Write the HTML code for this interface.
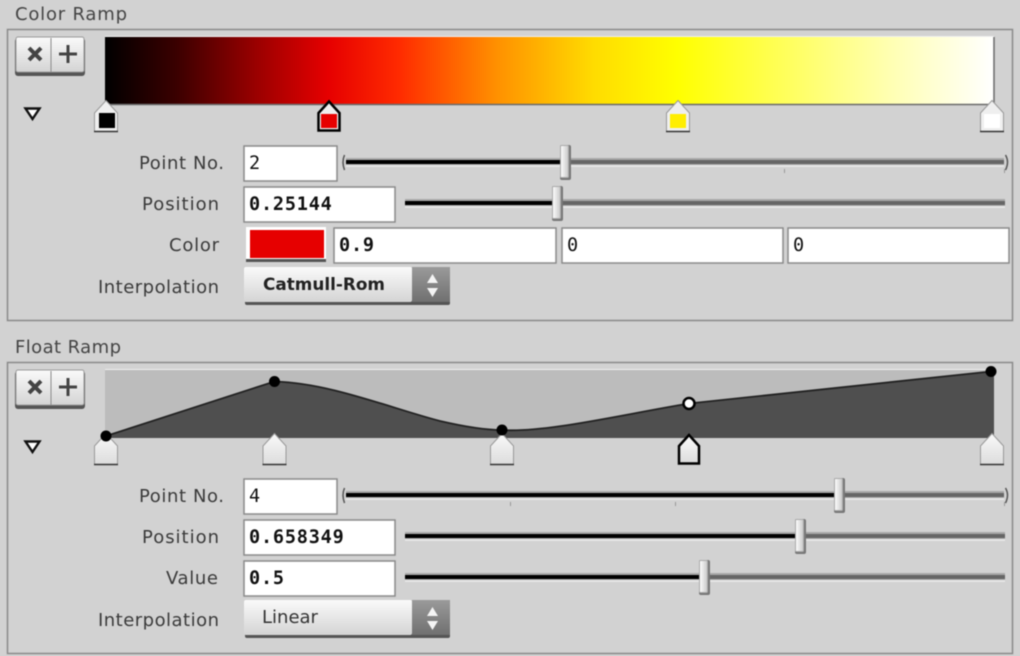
<!DOCTYPE html>
<html><head><meta charset="utf-8"><style>
html,body{margin:0;padding:0;background:#d2d2d2}
#r{position:relative;width:1020px;height:656px;overflow:hidden;background:#d2d2d2}
svg{position:absolute;left:0;top:0;filter:blur(.4px)}
text{font-family:"DejaVu Sans","Liberation Sans",sans-serif;font-size:18px;fill:#3a3a3a}
.m{font-family:"DejaVu Sans Mono","Liberation Mono",monospace;fill:#111}
.b{font-weight:bold;font-size:18.500px;letter-spacing:.8px}
.n{font-size:18.500px}
</style></head><body><div id="r">
<svg width="1020" height="656" viewBox="0 0 1020 656">
<defs>
<linearGradient id="cr" x1="0" x2="1" y1="0" y2="0">
<stop offset="0" stop-color="#000"/><stop offset=".08" stop-color="#3a0000"/><stop offset=".17" stop-color="#9a0000"/><stop offset=".251" stop-color="#e60000"/><stop offset=".33" stop-color="#ff2a00"/><stop offset=".44" stop-color="#ff9000"/><stop offset=".55" stop-color="#ffdc00"/><stop offset=".644" stop-color="#ffff00"/><stop offset=".75" stop-color="#ffff50"/><stop offset=".88" stop-color="#ffffb0"/><stop offset="1" stop-color="#fff"/>
</linearGradient>
<linearGradient id="btn" x1="0" x2="0" y1="0" y2="1"><stop offset="0" stop-color="#fafafa"/><stop offset="1" stop-color="#d4d4d4"/></linearGradient>
<linearGradient id="pt" x1="0" x2="0" y1="0" y2="1"><stop offset="0" stop-color="#fafafa"/><stop offset="1" stop-color="#dcdcdc"/></linearGradient>
<linearGradient id="hd" x1="0" x2="1" y1="0" y2="0"><stop offset="0" stop-color="#fff"/><stop offset="1" stop-color="#c8c8c8"/></linearGradient>
<linearGradient id="arr" x1="0" x2="0" y1="0" y2="1"><stop offset="0" stop-color="#9a9a9a"/><stop offset="1" stop-color="#707070"/></linearGradient>
<g id="tools">
<rect x="15" y="1" width="70" height="38" rx="3" fill="#555"/>
<rect x="16" y="0" width="68" height="35" rx="2" fill="url(#btn)" stroke="#9a9a9a" stroke-width="1"/>
<line x1="51" y1="1" x2="51" y2="35" stroke="#8a8a8a"/>
<path d="M29 11L41 23M41 11L29 23" stroke="#444" stroke-width="4" fill="none"/>
<path d="M59 17H77M68 8V26" stroke="#444" stroke-width="3" fill="none"/>
<path d="M25.500 71.500H39.500L32.500 82Z" fill="#fff" stroke="#111" stroke-width="2.400"/>
</g>
</defs>

<!-- Color Ramp -->
<text x="15" y="20" style="fill:#444" textLength="112">Color Ramp</text>
<rect x="7.500" y="29.500" width="1005" height="291" fill="none" stroke="#8a8a8a" stroke-width="1.500"/>
<use href="#tools" y="37"/>
<rect x="105" y="36" width="889" height="1" fill="#eee"/>
<rect x="105" y="37" width="889" height="67" fill="url(#cr)"/>
<path d="M105 104.500H994V37" fill="none" stroke="#6a6a6a" stroke-width="1.500"/>

<path d="M94.500 131.500V113L106 100.500L117.500 113V131.500Z" fill="#efefef" stroke="#999"/>
<path d="M94 131.500H118" stroke="#333" stroke-width="1.500"/>
<rect x="99" y="113" width="16" height="15" fill="#000"/>
<path d="M318.500 130.500V113L329 101.500L339.500 113V130.500Z" fill="#efefef" stroke="#000" stroke-width="2.500"/>
<rect x="321" y="114" width="16" height="14" fill="#e60000"/>
<path d="M666.500 131.500V113L678 100.500L689.500 113V131.500Z" fill="#efefef" stroke="#999"/>
<path d="M666 131.500H690" stroke="#333" stroke-width="1.500"/>
<rect x="670" y="114" width="16" height="14" fill="#ffee00"/>
<path d="M980.500 131.500V113L992 100.500L1003.500 113V131.500Z" fill="#efefef" stroke="#999"/>
<path d="M980 131.500H1004" stroke="#333" stroke-width="1.500"/>
<rect x="984" y="114" width="16" height="14" fill="#fff"/>

<text x="139" y="169" textLength="85">Point No.</text>
<text x="142" y="210" textLength="77">Position</text>
<text x="169" y="251" textLength="50">Color</text>
<text x="98" y="293" textLength="121">Interpolation</text>

<rect x="244" y="146" width="93" height="35" fill="#fff" stroke="#8a8a8a" stroke-width="1.500"/>
<text class="m n" x="249" y="169">2</text>
<rect x="244" y="187" width="151" height="35" fill="#fff" stroke="#8a8a8a" stroke-width="1.500"/>
<text class="m b" x="249" y="210">0.25144</text>

<rect x="246" y="227" width="80" height="35" fill="#fff"/>
<rect x="246" y="259" width="80" height="3" fill="#555"/>
<rect x="250" y="230" width="74" height="28" fill="#e60000"/>
<rect x="334" y="228" width="222" height="35" fill="#fff" stroke="#8a8a8a" stroke-width="1.500"/>
<text class="m b" x="339" y="251">0.9</text>
<rect x="562" y="228" width="221" height="35" fill="#fff" stroke="#8a8a8a" stroke-width="1.500"/>
<text class="m n" x="567" y="251">0</text>
<rect x="788" y="228" width="221" height="35" fill="#fff" stroke="#8a8a8a" stroke-width="1.500"/>
<text class="m n" x="793" y="251">0</text>

<!-- slider 1 -->
<path d="M344.500 155Q341.500 162 344.500 170" fill="none" stroke="#555" stroke-width="1.500"/>
<rect x="346" y="158" width="658" height="7" fill="#a8a8a8"/>
<rect x="346" y="160" width="658" height="4" fill="#666"/>
<rect x="346" y="165" width="658" height="2" fill="#e6e6e6"/>
<rect x="346" y="160" width="215" height="4" fill="#000"/>
<path d="M1005.500 155Q1009.500 162 1005.500 170" fill="none" stroke="#555" stroke-width="1.500"/>
<rect x="784" y="169" width="1" height="4" fill="#999"/><rect x="1004" y="169" width="1" height="4" fill="#999"/>
<rect x="560" y="145" width="11" height="35" rx="2" fill="#777"/>
<rect x="560.500" y="145.500" width="8" height="32" rx="1" fill="url(#hd)" stroke="#aaa"/>
<!-- slider 2 -->
<rect x="405" y="199" width="600" height="7" fill="#a8a8a8"/>
<rect x="405" y="201" width="600" height="4" fill="#666"/>
<rect x="405" y="206" width="600" height="2" fill="#e6e6e6"/>
<rect x="405" y="201" width="150" height="4" fill="#000"/>
<rect x="552" y="186" width="11" height="35" rx="2" fill="#777"/>
<rect x="552.500" y="186.500" width="8" height="32" rx="1" fill="url(#hd)" stroke="#aaa"/>

<!-- menu 1 -->
<rect x="245" y="269" width="205" height="36" rx="2" fill="#555"/>
<rect x="244" y="267" width="168" height="35" rx="2" fill="url(#btn)"/>
<rect x="412" y="267" width="38" height="35" fill="url(#arr)"/>
<text x="263" y="290" style="font-weight:bold;font-size:17px;fill:#222" textLength="122" lengthAdjust="spacingAndGlyphs">Catmull-Rom</text>
<path d="M427 283L432.500 274L438 283ZM427 288L432.500 297L438 288Z" fill="#f4f4f4"/>

<!-- Float Ramp -->
<text x="15" y="353" style="fill:#444" textLength="106">Float Ramp</text>
<rect x="7.500" y="362.500" width="1005" height="291" fill="none" stroke="#8a8a8a" stroke-width="1.500"/>
<use href="#tools" y="370"/>
<rect x="105" y="369" width="889" height="1" fill="#eee"/>
<rect x="105" y="370" width="889" height="68" fill="#bcbcbc"/>
<path d="M106 436L274.500 381.500C330 383 390 408 440 421C470 428 490 430 502 430C545 433 620 415 689 403.500L991 371.500L994 371V438H106Z" fill="#4f4f4f"/>
<path d="M106 436L274.500 381.500C330 383 390 408 440 421C470 428 490 430 502 430C545 433 620 415 689 403.500L991 371.500" fill="none" stroke="#222" stroke-width="1.800"/>

<path d="M94.500 464.500V446L106 433.500L117.500 446V464.500Z" fill="url(#pt)" stroke="#999"/><path d="M94 464.500H118" stroke="#333" stroke-width="1.500"/>
<path d="M263 464.500V446L274.500 433.500L286 446V464.500Z" fill="url(#pt)" stroke="#999"/><path d="M262.500 464.500H286.500" stroke="#333" stroke-width="1.500"/>
<path d="M490.500 464.500V446L502 433.500L513.500 446V464.500Z" fill="url(#pt)" stroke="#999"/><path d="M490 464.500H514" stroke="#333" stroke-width="1.500"/>
<path d="M679 463.500V446L689 435L699 446V463.500Z" fill="url(#pt)" stroke="#000" stroke-width="2.500"/>
<path d="M980.500 464.500V446L992 433.500L1003.500 446V464.500Z" fill="url(#pt)" stroke="#999"/><path d="M980 464.500H1004" stroke="#333" stroke-width="1.500"/>
<circle cx="106" cy="436" r="5.500" fill="#000"/>
<circle cx="274.500" cy="381.500" r="5.500" fill="#000"/>
<circle cx="502" cy="430" r="5.500" fill="#000"/>
<circle cx="689" cy="403.500" r="5.500" fill="#fff" stroke="#000" stroke-width="2.500"/>
<circle cx="991" cy="371.500" r="5.500" fill="#000"/>

<text x="139" y="502" textLength="85">Point No.</text>
<text x="142" y="543" textLength="77">Position</text>
<text x="166" y="584" textLength="52">Value</text>
<text x="98" y="626" textLength="121">Interpolation</text>

<rect x="244" y="479" width="93" height="35" fill="#fff" stroke="#8a8a8a" stroke-width="1.500"/>
<text class="m n" x="249" y="502">4</text>
<rect x="244" y="520" width="151" height="35" fill="#fff" stroke="#8a8a8a" stroke-width="1.500"/>
<text class="m b" x="249" y="543">0.658349</text>
<rect x="244" y="561" width="151" height="35" fill="#fff" stroke="#8a8a8a" stroke-width="1.500"/>
<text class="m b" x="249" y="584">0.5</text>

<path d="M344.500 488Q341.500 495 344.500 503" fill="none" stroke="#555" stroke-width="1.500"/>
<rect x="346" y="491" width="658" height="7" fill="#a8a8a8"/>
<rect x="346" y="493" width="658" height="4" fill="#666"/>
<rect x="346" y="498" width="658" height="2" fill="#e6e6e6"/>
<rect x="346" y="493" width="489" height="4" fill="#000"/>
<path d="M1005.500 488Q1009.500 495 1005.500 503" fill="none" stroke="#555" stroke-width="1.500"/>
<rect x="510" y="502" width="1" height="4" fill="#999"/><rect x="675" y="502" width="1" height="4" fill="#999"/><rect x="1004" y="502" width="1" height="4" fill="#999"/>
<rect x="834" y="478" width="11" height="35" rx="2" fill="#777"/>
<rect x="834.500" y="478.500" width="8" height="32" rx="1" fill="url(#hd)" stroke="#aaa"/>

<rect x="405" y="532" width="600" height="7" fill="#a8a8a8"/>
<rect x="405" y="534" width="600" height="4" fill="#666"/>
<rect x="405" y="539" width="600" height="2" fill="#e6e6e6"/>
<rect x="405" y="534" width="392" height="4" fill="#000"/>
<rect x="795" y="519" width="11" height="35" rx="2" fill="#777"/>
<rect x="795.500" y="519.500" width="8" height="32" rx="1" fill="url(#hd)" stroke="#aaa"/>

<rect x="405" y="573" width="600" height="7" fill="#a8a8a8"/>
<rect x="405" y="575" width="600" height="4" fill="#666"/>
<rect x="405" y="580" width="600" height="2" fill="#e6e6e6"/>
<rect x="405" y="575" width="296" height="4" fill="#000"/>
<rect x="699" y="560" width="11" height="35" rx="2" fill="#777"/>
<rect x="699.500" y="560.500" width="8" height="32" rx="1" fill="url(#hd)" stroke="#aaa"/>

<rect x="245" y="602" width="205" height="36" rx="2" fill="#555"/>
<rect x="244" y="600" width="168" height="35" rx="2" fill="url(#btn)"/>
<rect x="412" y="600" width="38" height="35" fill="url(#arr)"/>
<text x="262" y="623" style="font-size:18px;fill:#333">Linear</text>
<path d="M427 616L432.500 607L438 616ZM427 621L432.500 630L438 621Z" fill="#f4f4f4"/>
</svg>
</div></body></html>
